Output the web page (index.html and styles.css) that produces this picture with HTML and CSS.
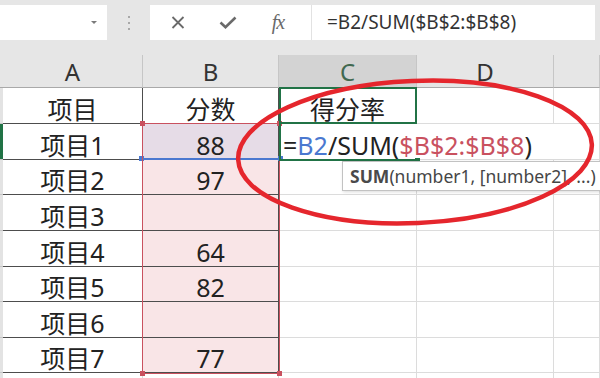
FILE: index.html
```html
<!DOCTYPE html>
<html lang="zh-CN">
<head>
  <meta charset="UTF-8">
  <title>得分率</title>
  <link rel="stylesheet" href="styles.css">
</head>
<body>
  <div class="page">

    <div class="toolbar">
      <div class="namebox"><span class="caret"></span></div>
      <div class="grip"><i></i><i></i><i></i></div>
      <div class="fbar">
        <div class="fbtns">
          <span class="fbtn">
            <svg width="14" height="13" viewBox="0 0 14 13"><path d="M1.5 1 L12.5 12 M12.5 1 L1.5 12" stroke="#6a6a6a" stroke-width="1.8" fill="none"/></svg>
          </span>
          <span class="fbtn">
            <svg width="18" height="13" viewBox="0 0 18 13"><path d="M1.5 6.5 L6.5 11.2 L16.5 1.5" stroke="#6a6a6a" stroke-width="2.6" fill="none"/></svg>
          </span>
          <span class="fbtn fx">fx</span>
        </div>
        <div class="ftext">=B2/SUM($B$2:$B$8)</div>
      </div>
    </div>

    <div class="sheet">
      <!-- column headers -->
      <div class="hd corner"></div>
      <div class="hd">A</div>
      <div class="hd">B</div>
      <div class="hd hd-on">C</div>
      <div class="hd">D</div>
      <div class="hd"></div>

      <div class="rh"></div>
      <div class="cell tbl">项目</div>
      <div class="cell tbl">分数</div>
      <div class="cell">得分率</div>
      <div class="cell"></div>
      <div class="cell"></div>

      <div class="rh rh-on"></div>
      <div class="cell tbl">项目1</div>
      <div class="cell tbl ref">88</div>
      <div class="cell formula">=<span class="f-blue">B2</span>/SUM(<span class="f-red">$B$2:$B$8</span>)</div>
      <div class="cell open"></div>
      <div class="cell"></div>

      <div class="rh"></div>
      <div class="cell tbl">项目2</div>
      <div class="cell tbl rng">97</div>
      <div class="cell"></div>
      <div class="cell"></div>
      <div class="cell"></div>

      <div class="rh"></div>
      <div class="cell tbl">项目3</div>
      <div class="cell tbl rng"></div>
      <div class="cell"></div>
      <div class="cell"></div>
      <div class="cell"></div>

      <div class="rh"></div>
      <div class="cell tbl">项目4</div>
      <div class="cell tbl rng">64</div>
      <div class="cell"></div>
      <div class="cell"></div>
      <div class="cell"></div>

      <div class="rh"></div>
      <div class="cell tbl">项目5</div>
      <div class="cell tbl rng">82</div>
      <div class="cell"></div>
      <div class="cell"></div>
      <div class="cell"></div>

      <div class="rh"></div>
      <div class="cell tbl">项目6</div>
      <div class="cell tbl rng"></div>
      <div class="cell"></div>
      <div class="cell"></div>
      <div class="cell"></div>

      <div class="rh"></div>
      <div class="cell tbl">项目7</div>
      <div class="cell tbl rng">77</div>
      <div class="cell"></div>
      <div class="cell"></div>
      <div class="cell"></div>

      <div class="rh"></div>
      <div class="cell"></div>
      <div class="cell"></div>
      <div class="cell"></div>
      <div class="cell"></div>
      <div class="cell"></div>

      <!-- selection / reference outlines drawn over the cells -->
      <div class="box box-blue"><i class="dot bl blue"></i><i class="dot br blue"></i></div>
      <div class="box box-red">
        <i class="dot tl"></i><i class="dot tr"></i><i class="dot bl"></i><i class="dot br"></i>
      </div>
      <div class="box box-c1"></div>
      <div class="box box-c2"><i class="handle"></i></div>

      <div class="tip"><b>SUM</b>(number1, [number2], ...)</div>
    </div>

    <svg class="mark" width="600" height="378" viewBox="0 0 600 378">
      <ellipse cx="415" cy="152" rx="177" ry="71" transform="rotate(-2.5 415 152)" fill="none" stroke="#e5262d" stroke-width="4.5"/>
    </svg>
  </div>
</body>
</html>
```

FILE: styles.css
```css
:root {
  --green: #217346;
  --red: #c9515f;
  --blue: #4a78d0;
  --grid: #dcdcdc;
  --dark: #4d4d4d;
}

body {
  margin: 0;
  background: #fff;
  font-family: "Noto Sans", "Noto Sans CJK SC", sans-serif;
}

.page {
  position: relative;
  width: 600px;
  height: 378px;
  overflow: hidden;
}

/* formula bar */
.toolbar {
  display: flex;
  height: 55px;
  box-sizing: border-box;
  padding: 5px 5px 15px 0;
  background: #e6e6e6;
}

.namebox {
  width: 107px;
  background: #fff;
  display: flex;
  align-items: center;
  justify-content: flex-end;
  padding-right: 10px;
  box-sizing: border-box;
}

.caret {
  width: 0;
  height: 0;
  border-left: 3px solid transparent;
  border-right: 3px solid transparent;
  border-top: 3px solid #7a7a7a;
}

.grip {
  width: 43px;
  display: flex;
  flex-direction: column;
  align-items: center;
  justify-content: center;
  gap: 4px;
}

.grip i {
  width: 2px;
  height: 2px;
  background: #a8a8a8;
}

.fbar {
  flex: 1;
  display: flex;
  background: #fff;
}

.fbtns {
  width: 162px;
  display: flex;
  align-items: center;
  padding-left: 3px;
  box-sizing: border-box;
  border-right: 1px solid #e2e2e2;
}

.fbtn {
  width: 50px;
  display: flex;
  justify-content: center;
  align-items: center;
}

.fx {
  font: italic 20px "Liberation Serif", serif;
  color: #6a6a6a;
  letter-spacing: -1px;
}

.ftext {
  padding-left: 15px;
  font-size: 19px;
  line-height: 35px;
  color: #333;
}

/* sheet */
.sheet {
  position: relative;
  display: grid;
  grid-template-columns: 3px 140px 136px 138px 137px 46px;
  grid-template-rows: 33px 36px 36px 35px 36px 36px 35px 36px 35px 10px;
}

.hd {
  background: #e6e6e6;
  border-right: 1px solid #c6c6c6;
  border-bottom: 1px solid #a9a9a9;
  font-size: 24px;
  color: #333;
  display: flex;
  align-items: center;
  justify-content: center;
}

.hd.corner {
  border-right: none;
}

.hd-on {
  background: #d3d3d3;
  color: #41684f;
}

.rh {
  background: #e3e3e3;
  border-bottom: 1px solid #c6c6c6;
}

.rh-on {
  background: var(--green);
}

.cell {
  border-right: 1px solid var(--grid);
  border-bottom: 1px solid var(--grid);
  font-size: 25px;
  line-height: 25px;
  color: #222;
  display: flex;
  align-items: flex-end;
  justify-content: center;
  padding-bottom: 1px;
  white-space: nowrap;
}

.cell.tbl {
  border-color: var(--dark);
}

.cell.rng {
  background: #f9e5e7;
}

.cell.ref {
  background: #e6dce7;
}

.cell.formula {
  justify-content: flex-start;
  padding-left: 4px;
  border-right: none;
  position: relative;
  z-index: 1;
}

.cell.open {
  border-right: none;
}

.f-blue {
  color: var(--blue);
}

.f-red {
  color: var(--red);
}

/* outlines */
.box {
  position: absolute;
  box-sizing: border-box;
  z-index: 2;
}

.box-red {
  left: 142px;
  top: 68px;
  width: 138px;
  height: 251px;
  border: 1px solid var(--red);
}

.box-blue {
  left: 142px;
  top: 68px;
  width: 138px;
  height: 37px;
  border-bottom: 2px solid var(--blue);
}

.box-c1 {
  left: 279px;
  top: 32px;
  width: 138px;
  height: 37px;
  border: 2px solid var(--green);
}

.box-c2 {
  left: 279px;
  top: 68px;
  width: 138px;
  height: 38px;
  border-left: 2px solid var(--green);
  border-bottom: 2px solid var(--green);
}

.dot {
  position: absolute;
  width: 5px;
  height: 5px;
  background: var(--red);
}

.dot.blue {
  background: var(--blue);
}

.tl { left: -3px; top: -3px; }
.tr { right: -3px; top: -3px; }
.bl { left: -3px; bottom: -3px; }
.br { right: -3px; bottom: -3px; }

.handle {
  position: absolute;
  right: -3px;
  bottom: -4px;
  width: 5px;
  height: 5px;
  background: var(--green);
}

.tip {
  position: absolute;
  left: 342px;
  top: 106px;
  width: 280px;
  height: 30px;
  box-sizing: border-box;
  padding-left: 7px;
  background: #fff;
  border: 1px solid #c2c2c2;
  box-shadow: 1px 1px 3px rgba(0, 0, 0, 0.15);
  font-size: 17.5px;
  line-height: 28px;
  color: #464646;
  z-index: 3;
}

.tip b {
  color: #4a4a4a;
}

.mark {
  position: absolute;
  left: 0;
  top: 0;
  z-index: 5;
  pointer-events: none;
}
```
